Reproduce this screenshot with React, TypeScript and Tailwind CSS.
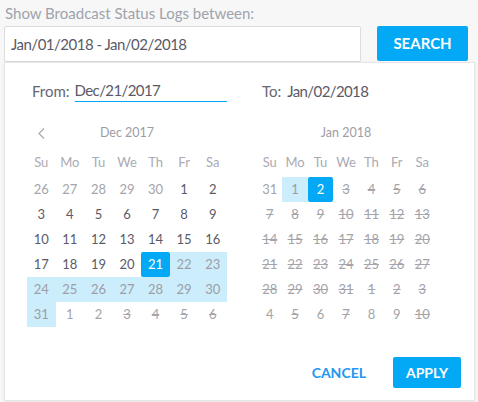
import React from "react";

type Kind = "normal" | "off" | "range" | "selected" | "disabled";
type Day = { d: number; k: Kind };

const HEADERS = ["Su", "Mo", "Tu", "We", "Th", "Fr", "Sa"];

const dec: Day[] = [
	...[26, 27, 28, 29, 30].map((d) => ({ d, k: "off" as Kind })),
	...Array.from({ length: 20 }, (_, i) => ({ d: i + 1, k: "normal" as Kind })),
	{ d: 21, k: "selected" },
	...Array.from({ length: 10 }, (_, i) => ({ d: i + 22, k: "range" as Kind })),
	{ d: 1, k: "off" },
	{ d: 2, k: "off" },
	...[3, 4, 5, 6].map((d) => ({ d, k: "disabled" as Kind })),
];

const jan: Day[] = [
	{ d: 31, k: "off" },
	{ d: 1, k: "range" },
	{ d: 2, k: "selected" },
	...Array.from({ length: 29 }, (_, i) => ({ d: i + 3, k: "disabled" as Kind })),
	...[1, 2, 3].map((d) => ({ d, k: "disabled" as Kind })),
	{ d: 4, k: "off" },
	{ d: 5, k: "disabled" },
	{ d: 6, k: "off" },
	{ d: 7, k: "disabled" },
	{ d: 8, k: "off" },
	{ d: 9, k: "off" },
	{ d: 10, k: "disabled" },
];

const cellClass: Record<Kind, string> = {
	normal: "text-[#5a5a68]",
	off: "text-[#a4a4aa]",
	range: "bg-[#ccedfc] text-[#9d9da5]",
	selected: "bg-[#03a9f4] text-white rounded-[2px]",
	disabled: "text-[#a4a4aa] line-through",
};

const Chevron = () => (
	<svg width="9" height="13" viewBox="0 0 9 13" fill="none">
		<path d="M7 1.5 L2 6.5 L7 11.5" stroke="#a9a9b0" strokeWidth="1.2" />
	</svg>
);

const Calendar = ({
	title,
	days,
	width,
	prev,
}: {
	title: string;
	days: Day[];
	width: string;
	prev?: boolean;
}) => (
	<div className={`${width} text-[13px]`}>
		<div className="grid grid-cols-7 h-[24px] items-center">
			<div className="flex justify-center">{prev ? <Chevron /> : null}</div>
			<div className="col-span-5 text-center text-[12.5px] text-[#9d9da5]">{title}</div>
			<div />
		</div>
		<div className="grid grid-cols-7 h-[25px] mt-[5px] items-center text-[#aaaab2]">
			{HEADERS.map((h) => (
				<div key={h} className="text-center">
					{h}
				</div>
			))}
		</div>
		<div className="grid grid-cols-7 mt-[2px]">
			{days.map((day, idx) => (
				<div
					key={idx}
					className={`h-[25px] flex items-center justify-center ${cellClass[day.k]}`}
				>
					{day.d}
				</div>
			))}
		</div>
	</div>
);

export default function App() {
	return (
		<div className="w-[478px] h-[402px] bg-[#f7f7f7] relative overflow-hidden font-['Lato',sans-serif]">
			<div className="pl-[5px] pt-[4px] text-[15px] leading-[18px] text-[#9ea3ab]">
				Show Broadcast Status Logs between:
			</div>
			<div className="flex mt-[4px] ml-[4px]">
				<div className="w-[357px] h-[36px] bg-white border border-[#dcdcdc] rounded-[2px] flex items-center pl-[6px] text-[15px] tracking-[-0.5px] text-[#5a5a66]">
					Jan/01/2018 - Jan/02/2018
				</div>
				<button className="ml-[16px] w-[91px] h-[35px] bg-[#03a9f4] rounded-[2px] text-white font-bold text-[15px]">
					SEARCH
				</button>
			</div>

			<div className="absolute left-[4px] top-[62px] w-[471px] h-[339px] bg-white border border-[#e6e6e6] shadow-[0_1px_3px_rgba(0,0,0,0.08)] flex flex-col">
				<div className="flex pt-[17px]">
					<div className="ml-[22px] w-[200px]">
						<div className="flex items-center h-[22px] pl-[5px] text-[15px]">
							<span className="text-[#666672]">From:</span>
							<div className="ml-[5px] w-[155px] h-[22px] border-b border-[#03a9f4] text-[#5a5a66] tracking-[-0.6px] flex items-center">
								Dec/21/2017
							</div>
						</div>
						<div className="mt-[19px]">
							<Calendar title="Dec 2017" days={dec} width="w-[200px]" prev />
						</div>
					</div>
					<div className="ml-[30px] w-[178px]">
						<div className="flex items-center h-[22px] pl-[5px] text-[15px]">
							<span className="text-[#666672]">To:</span>
							<span className="ml-[6px] text-[#5a5a66] tracking-[-0.6px]">Jan/02/2018</span>
						</div>
						<div className="mt-[19px]">
							<Calendar title="Jan 2018" days={jan} width="w-[178px]" />
						</div>
					</div>
				</div>
				<div className="flex justify-end items-center mt-auto mb-[12px] pr-[13px]">
					<button className="px-[8px] h-[31px] text-[14px] font-bold text-[#2196f3]">CANCEL</button>
					<button className="ml-[19px] w-[68px] h-[31px] bg-[#03a9f4] rounded-[2px] text-white font-bold text-[14px]">
						APPLY
					</button>
				</div>
			</div>
		</div>
	);
}
